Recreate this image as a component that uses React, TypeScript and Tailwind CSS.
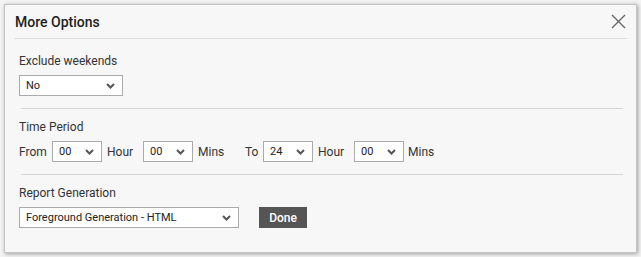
import React from 'react';

const Chevron = () => (
  <svg width="9" height="6" viewBox="0 0 9 6" className="shrink-0">
    <path d="M1 1 L4.5 4.5 L8 1" fill="none" stroke="#555" strokeWidth="2" />
  </svg>
);

const Select = ({ value, width }: { value: string; width: string }) => (
  <div
    className={`${width} h-[21px] bg-white border border-[#aaaaaa] flex items-center justify-between pl-[6px] pr-[7px] text-[11px] text-[#222]`}
  >
    <span>{value}</span>
    <Chevron />
  </div>
);

export default function App() {
  return (
    <div
      className="w-[641px] h-[257px] bg-[#f3f3f3] flex pt-[4px] pl-[4px] overflow-hidden"
      style={{ fontFamily: 'Roboto, "Liberation Sans", sans-serif' }}
    >
      {/* Dialog */}
      <div className="w-[633px] h-[249px] bg-[#f7f7f7] border border-[#c4c4c4] shadow-[1px_1px_4px_rgba(0,0,0,0.35)] flex flex-col text-[#333]">
        {/* Header */}
        <div className="mx-[9px] pt-[7px] h-[34px] border-b border-[#dddddd] flex items-start justify-between">
          <span className="pl-[1px] text-[14px] leading-[20px] font-medium text-[#222]">More Options</span>
          <svg width="15" height="15" viewBox="0 0 15 15" className="mt-[2px] mr-[1px]">
            <path d="M1 1 L14 14 M14 1 L1 14" stroke="#666" strokeWidth="1.4" />
          </svg>
        </div>

        {/* Body */}
        <div className="pl-[14px] pr-[13px] flex flex-col text-[12px] leading-[16px]">
          <div className="mt-[14px]">Exclude weekends</div>
          <div className="mt-[6px]">
            <Select value="No" width="w-[104px]" />
          </div>
          <div className="mt-[12px] ml-[2px] border-t border-[#d6d6d6]" />

          <div className="mt-[10px]">Time Period</div>
          <div className="mt-[6px] flex items-center">
            <span className="w-[33px]">From</span>
            <Select value="00" width="w-[50px]" />
            <span className="ml-[5px] w-[36px]">Hour</span>
            <Select value="00" width="w-[50px]" />
            <span className="ml-[5px] w-[47px]">Mins</span>
            <span className="w-[18px]">To</span>
            <Select value="24" width="w-[50px]" />
            <span className="ml-[5px] w-[36px]">Hour</span>
            <Select value="00" width="w-[50px]" />
            <span className="ml-[4px]">Mins</span>
          </div>
          <div className="mt-[12px] ml-[2px] border-t border-[#d6d6d6]" />

          <div className="mt-[10px]">Report Generation</div>
          <div className="mt-[6px] flex items-center">
            <Select value="Foreground Generation - HTML" width="w-[220px]" />
            <button className="ml-[20px] w-[48px] h-[21px] bg-[#555555] text-white text-[12px] font-medium flex items-center justify-center">
              Done
            </button>
          </div>
        </div>
      </div>
    </div>
  );
}
